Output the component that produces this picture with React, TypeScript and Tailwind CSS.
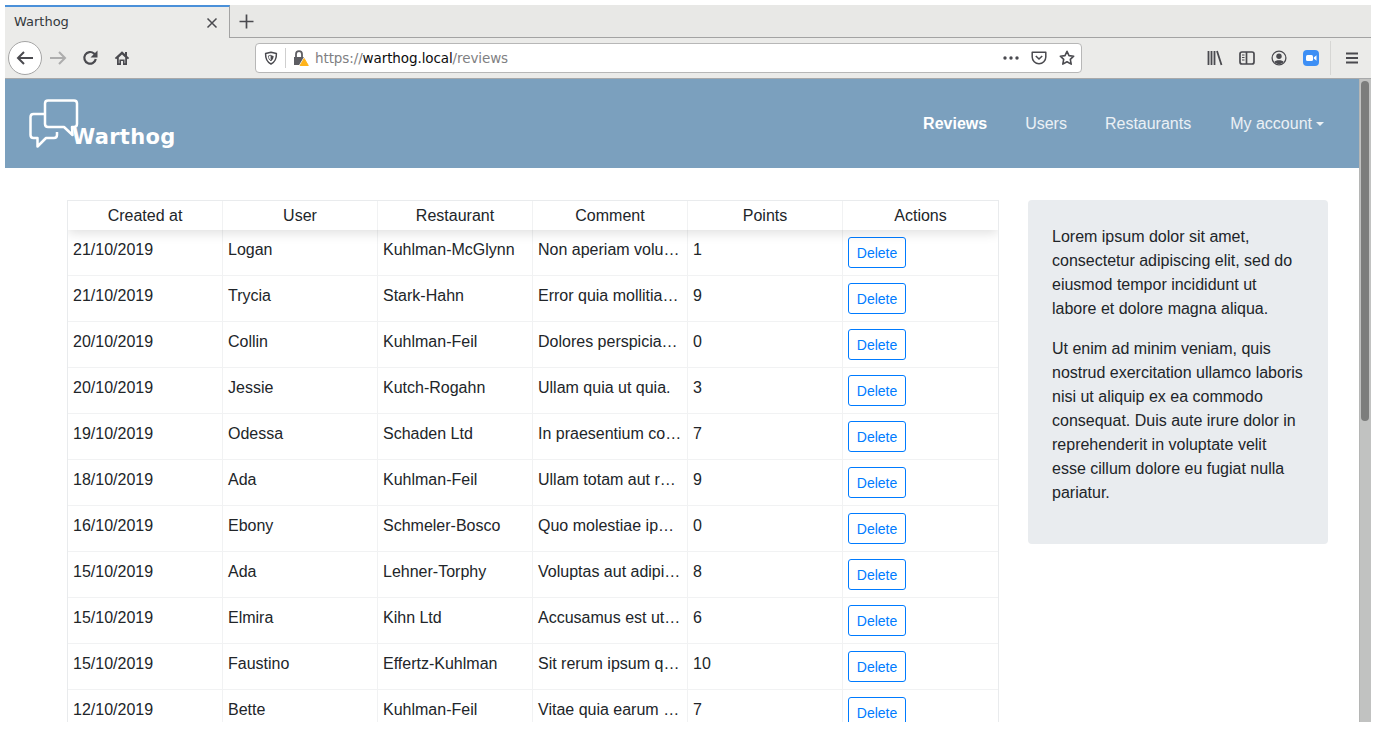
import React from "react";

const rows = [
  ["21/10/2019", "Logan", "Kuhlman-McGlynn", "Non aperiam voluptatem quia", "1"],
  ["21/10/2019", "Trycia", "Stark-Hahn", "Error quia mollitia sit amet", "9"],
  ["20/10/2019", "Collin", "Kuhlman-Feil", "Dolores perspiciatis illum est", "0"],
  ["20/10/2019", "Jessie", "Kutch-Rogahn", "Ullam quia ut quia.", "3"],
  ["19/10/2019", "Odessa", "Schaden Ltd", "In praesentium corrupti sed", "7"],
  ["18/10/2019", "Ada", "Kuhlman-Feil", "Ullam totam aut rerum quia", "9"],
  ["16/10/2019", "Ebony", "Schmeler-Bosco", "Quo molestiae ipsum dolor", "0"],
  ["15/10/2019", "Ada", "Lehner-Torphy", "Voluptas aut adipisci quia", "8"],
  ["15/10/2019", "Elmira", "Kihn Ltd", "Accusamus est ut dolorem", "6"],
  ["15/10/2019", "Faustino", "Effertz-Kuhlman", "Sit rerum ipsum quia nam", "10"],
  ["12/10/2019", "Bette", "Kuhlman-Feil", "Vitae quia earum dolores", "7"],
];

const headers = ["Created at", "User", "Restaurant", "Comment", "Points", "Actions"];

function Ic({ w = 16, h = 16, children, className = "" }: { w?: number; h?: number; children: React.ReactNode; className?: string }) {
  return (
    <svg width={w} height={h} viewBox={`0 0 ${w} ${h}`} fill="none" className={`shrink-0 ${className}`}>
      {children}
    </svg>
  );
}

const G = "#4a4a4f";

export default function App() {
  return (
    <div className="h-[732px] w-[1380px] overflow-hidden bg-white pb-[10px] pl-[5px] pr-[9px] pt-[5px] font-['Liberation_Sans',sans-serif] text-[16px] leading-6 text-[#212529]">
      <div className="flex h-full flex-col">
        {/* tab strip */}
        <div className="flex h-[33px] shrink-0 bg-[#e8e8e6]">
          <div className="flex w-[225px] shrink-0 items-center justify-between border-t-2 border-r border-t-[#4a90d9] border-r-[#a3a3a3] bg-[#ebebe9] pb-[2px] pl-[9px] pr-[11px] font-['DejaVu_Sans',sans-serif] text-[13px] text-[#33383c]">
            <span>Warthog</span>
            <Ic w={12} h={12} className="mt-[2px]">
              <path d="M1.5 1.5 10.5 10.5M10.500 1.500 1.500 10.500" stroke={G} strokeWidth="1.5" />
            </Ic>
          </div>
          <div className="flex flex-1 items-center border-b border-[#a3a3a3] pl-[9px]">
            <Ic w={15} h={15}>
              <path d="M7.500 0.500V14.500M0.500 7.500H14.500" stroke={G} strokeWidth="1.700" />
            </Ic>
          </div>
        </div>
        {/* toolbar */}
        <div className="flex h-[41px] shrink-0 items-center border-b border-[#a8a9aa] bg-[#ebebe9]">
          <div className="ml-[3px] flex h-[34px] w-[34px] shrink-0 items-center justify-center rounded-full border border-[#a5a5a5] bg-white">
            <Ic w={18} h={16}>
              <path d="M17 8H2M8 2 2 8l6 6" stroke={G} strokeWidth="2" />
            </Ic>
          </div>
          <Ic w={18} h={16} className="ml-[7px]">
            <path d="M1 8H16M10 2l6 6-6 6" stroke="#adadad" strokeWidth="2" />
          </Ic>
          <Ic w={16} h={16} className="ml-[15px]">
            <path d="M13.800 9A5.800 5.800 0 1 1 12 3.500L14 5.500" stroke={G} strokeWidth="2.200" />
            <path d="M15.500 .5v7h-7z" fill={G} />
          </Ic>
          <Ic w={16} h={16} className="ml-[16px]">
            <path d="M8 1.200 .8 8l1.300 1.300L3 8.500V15H7V11H9V15H13V8.500L13.900 9.300 15.200 8 13 5.900V2H11V4z" fill={G} />
            <path d="M8 4.500 4.800 7.500V13.300H5.400V9.500H10.600V13.300H11.200V7.500z" fill="#ebebe9" />
          </Ic>
          {/* url bar */}
          <div className="ml-[125px] flex h-[30px] w-[827px] shrink-0 items-center rounded-[4px] border border-[#b7b7b7] bg-white">
            <Ic w={14} h={14} className="ml-[8px]">
              <path d="M7 1.200 12.400 2.600C12.600 7.600 11 11 7 13 3 11 1.400 7.600 1.600 2.600z" stroke={G} strokeWidth="1.500" strokeLinejoin="round" />
              <path d="M7 4.200 9.600 4.900C9.600 7.200 8.800 8.800 7 9.900z" fill={G} />
              <path d="M7 4.200 4.400 4.900C4.400 7.200 5.200 8.800 7 9.900z" stroke={G} strokeWidth=".8" />
            </Ic>
            <div className="ml-[7px] h-[20px] w-px bg-[#cfcfcf]" />
            <Ic w={16} h={16} className="ml-[7px]">
              <path d="M1 7h10v8H1z" fill="#5d5d62" />
              <path d="M3 7V4.200a3 3 0 0 1 6 0V7" stroke="#5d5d62" strokeWidth="1.800" />
              <path d="M11.200 6.500 16.500 16H5.500z" fill="#fff" />
              <path d="M11.200 8.500 15.300 15.500H7.100z" fill="#ffb31a" stroke="#ffb31a" strokeLinejoin="round" />
            </Ic>
            <span className="ml-[6px] font-['DejaVu_Sans',sans-serif] text-[13.5px] tracking-[-0.1px] text-[#7f7f83]">
              https://<span className="text-[#0c0c0d]">warthog.local</span>/reviews
            </span>
            <div className="flex-1" />
            <Ic w={16} h={4}>
              <circle cx="2" cy="2" r="1.700" fill={G} />
              <circle cx="8" cy="2" r="1.700" fill={G} />
              <circle cx="14" cy="2" r="1.700" fill={G} />
            </Ic>
            <Ic w={16} h={16} className="ml-[12px]">
              <path d="M1.200 2.200h13.600V7a6.800 6.800 0 0 1-13.600 0z" stroke={G} strokeWidth="1.500" strokeLinejoin="round" />
              <path d="M4.800 6 8 9l3.200-3" stroke={G} strokeWidth="1.600" />
            </Ic>
            <Ic w={16} h={16} className="ml-[12px] mr-[6px]">
              <path d="M8 1.300 10 5.600l4.700.6-3.400 3.200.9 4.700L8 11.800l-4.200 2.300.9-4.700L1.300 6.200 6 5.600z" stroke={G} strokeWidth="1.600" strokeLinejoin="round" />
            </Ic>
          </div>
          <Ic w={16} h={16} className="ml-[125px]">
            <path d="M1.500 1V15M4.500 1V15M7.500 1V15M10 1l4.500 14" stroke={G} strokeWidth="1.800" />
          </Ic>
          <Ic w={16} h={16} className="ml-[16px]">
            <rect x="1" y="2" width="14" height="12" rx="2" stroke={G} strokeWidth="1.700" />
            <path d="M7.500 2V14" stroke={G} strokeWidth="1.700" />
            <path d="M3 5h2.500M3 7.500h2.500M3 10h2.500" stroke={G} strokeWidth="1" />
          </Ic>
          <Ic w={16} h={16} className="ml-[16px]">
            <circle cx="8" cy="8" r="6.900" stroke={G} strokeWidth="1.300" />
            <circle cx="8" cy="6.300" r="2.700" fill={G} />
            <path d="M3.300 12c1-2.400 8.400-2.400 9.400 0-1.400 1.500-3 2.100-4.700 2.100s-3.300-.6-4.700-2.100z" fill={G} />
          </Ic>
          <Ic w={16} h={16} className="ml-[16px]">
            <rect width="16" height="16" rx="4" fill="#3d8ff5" />
            <rect x="3" y="5" width="7" height="6" rx="1.500" fill="#fff" />
            <path d="M10.800 7.400 13.500 5.300V10.700L10.800 8.600z" fill="#fff" />
          </Ic>
          <div className="ml-[11px] h-[34px] w-px bg-[#d6d6d4]" />
          <Ic w={14} h={12} className="ml-[14px]">
            <path d="M1 1.500H13M1 6H13M1 10.500H13" stroke={G} strokeWidth="1.800" />
          </Ic>
        </div>
        {/* viewport */}
        <div className="flex min-h-0 flex-1">
          <div className="min-w-0 flex-1 overflow-hidden">
            <nav className="flex h-[89px] items-center justify-between bg-[#7ba0be] pl-[24px] pr-[35px]">
              <div className="flex items-start">
                <svg width="50" height="50" viewBox="0 0 50 50" fill="none" className="mt-[2px] shrink-0">
                  <path d="M15 15H4.500Q1.500 15 1.500 18V36Q1.500 39 4.500 39H8.500L8.500 47.500 17 39H25Q28 39 28 36V33" stroke="#fff" strokeWidth="2.500" strokeLinejoin="round" />
                  <path d="M19 1.500H45Q48 1.500 48 4.500V25Q48 28 45 28H43L43.500 36 35 28H19Q16 28 16 25V4.500Q16 1.500 19 1.500Z" stroke="#fff" strokeWidth="2.500" strokeLinejoin="round" fill="#7ba0be" />
                </svg>
                <span className="ml-[-7px] mt-[26px] font-['DejaVu_Sans',sans-serif] text-[21px] font-bold leading-7 tracking-[0.3px] text-white">
                  Warthog
                </span>
              </div>
              <div className="flex items-center text-white/85">
                <span className="font-bold text-white">Reviews</span>
                <span className="ml-[38px]">Users</span>
                <span className="ml-[38px]">Restaurants</span>
                <span className="ml-[39px]">My account</span>
                <span className="ml-[4px] h-0 w-0 border-x-[4.800px] border-t-[4.800px] border-x-transparent border-t-white/85" />
              </div>
            </nav>
            <div className="flex items-start pl-[62px] pr-[31px] pt-[32px]">
              <div className="w-[932px] shrink-0 overflow-hidden border-x border-[#e9ebed]">
                <div className="relative z-10 grid h-[30px] grid-cols-[154px_repeat(4,155px)_156px] border-t border-[#e9ebed] bg-white shadow-[0_3px_12px_rgba(0,0,0,0.13)]">
                  {headers.map((h, i) => (
                    <div key={h} className={`flex items-center justify-center ${i > 0 ? "border-l border-[#f1f2f3]" : ""}`}>
                      {h}
                    </div>
                  ))}
                </div>
                {rows.map((r, i) => (
                  <div key={i} className="grid h-[46px] grid-cols-[154px_repeat(4,155px)_156px] border-b border-[#f1f2f3]">
                    {r.map((c, j) => (
                      <div key={j} className={`truncate pl-[5px] pr-[5px] pt-[8px] ${j > 0 ? "border-l border-[#f1f2f3]" : ""}`}>
                        {c}
                      </div>
                    ))}
                    <div className="border-l border-[#f1f2f3] pl-[5px] pt-[7px]">
                      <button className="flex h-[31px] w-[58px] items-center justify-center rounded-[3px] border border-[#007bff] text-[14px] text-[#007bff]">
                        Delete
                      </button>
                    </div>
                  </div>
                ))}
              </div>
              <aside className="ml-[29px] min-w-0 flex-1 rounded-[4px] bg-[#e9ecef] px-[24px] pb-[23px] pt-[25px]">
                <p className="mb-[16px]">
                  Lorem ipsum dolor sit amet, consectetur adipiscing elit, sed do eiusmod tempor incididunt ut labore et dolore magna aliqua.
                </p>
                <p className="mb-[16px]">
                  Ut enim ad minim veniam, quis nostrud exercitation ullamco laboris nisi ut aliquip ex ea commodo consequat. Duis aute irure dolor in reprehenderit in voluptate velit esse cillum dolore eu fugiat nulla pariatur.
                </p>
              </aside>
            </div>
          </div>
          <div className="w-[12px] shrink-0 border-l border-[#b5b6b5] bg-[#c1c2c1] pl-[1px] pt-[2px]">
            <div className="h-[340px] w-[8px] rounded-full bg-[#7c7d7c]" />
          </div>
        </div>
      </div>
    </div>
  );
}
